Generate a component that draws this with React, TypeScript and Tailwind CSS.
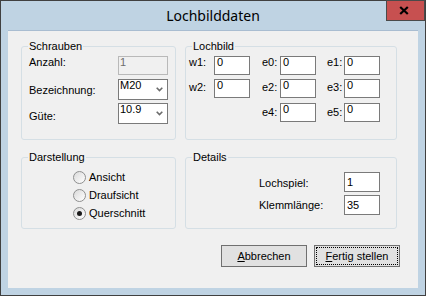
import React from "react";

type GroupProps = {
  title: string;
  className?: string;
  children?: React.ReactNode;
};

// group box with the caption sitting on the top border
const Group = ({ title, className, children }: GroupProps) => (
  <div className={`relative border border-[#d5dfe5] rounded-[3px] ${className ?? ""}`}>
    <span className="absolute left-[6px] top-[-7px] px-[1px] bg-[#f0f0f0] leading-[13px]">{title}</span>
    {children}
  </div>
);

const TextBox = ({ value, className }: { value: string; className?: string }) => (
  <div className={`w-[36px] border border-[#7a7a7a] bg-white pl-[2px] ${className ?? ""}`}>{value}</div>
);

const Combo = ({ value }: { value: string }) => (
  <div className="w-[50px] h-[21px] border border-[#7a7a7a] bg-white flex justify-between pl-[1px] pr-[4px] leading-[11px]">
    <span>{value}</span>
    <svg width="7" height="5" viewBox="0 0 7 5" className="self-center">
      <path d="M0.7 0.8 L3.5 3.6 L6.3 0.8" fill="none" stroke="#6b6b6b" strokeWidth="1.6" />
    </svg>
  </div>
);

const Radio = ({ label, checked }: { label: string; checked?: boolean }) => (
  <div className="flex items-center h-[18px] gap-[3px]">
    <span className="w-[13px] h-[13px] rounded-full border border-[#8e8f8f] bg-linear-to-br from-[#dadada] to-white flex items-center justify-center">
      {checked && <span className="w-[5px] h-[5px] rounded-full bg-[#1a1a1a]" />}
    </span>
    <span className="leading-[13px]">{label}</span>
  </div>
);

export default function App() {
  return (
    <div className="w-[426px] h-[296px] border border-[#404040] bg-[#bfd3e3] flex flex-col text-[11px] text-black font-['Liberation_Sans',Arial,sans-serif]">
      <div className="grid grid-cols-[39px_1fr_39px] h-[29px] shrink-0">
        <div />
        <div className="text-center text-[14px] leading-[29px] font-['Noto_Sans',sans-serif]">Lochbilddaten</div>
        <div className="-mt-[1px] self-start w-[39px] h-[21px] bg-[#c75050] border border-[#4a4a4a] flex items-center justify-center pr-[3px]">
          <svg width="10" height="9" viewBox="0 0 10 9">
            <path d="M1.2 1 L8.8 8 M8.8 1 L1.2 8" stroke="#000" strokeWidth="2.2" />
          </svg>
        </div>
      </div>

      <div className="mx-[7px] h-[258px] border-t border-[#a9bdd1] bg-[#f0f0f0] flex flex-col pt-[15px]">
        <div className="flex pl-[13px] gap-[9px]">
          <Group title="Schrauben" className="w-[155px] h-[94px]">
            <div className="flex flex-col px-[7px] pt-[9px]">
              <div className="flex justify-between items-start h-[23px]">
                <span className="leading-[13px]">Anzahl:</span>
                <div className="w-[50px] h-[19px] border border-[#b9b9b9] bg-[#f0f0f0] text-[#6d6d6d] pl-[1px] leading-[11px]">1</div>
              </div>
              <div className="flex justify-between items-start h-[24px]">
                <span className="leading-[13px] mt-[5px]">Bezeichnung:</span>
                <Combo value="M20" />
              </div>
              <div className="flex justify-between items-start h-[21px]">
                <span className="leading-[13px] mt-[7px]">Güte:</span>
                <Combo value="10.9" />
              </div>
            </div>
          </Group>

          <Group title="Lochbild" className="w-[212px] h-[94px]">
            <div className="flex flex-col pl-[3px] pt-[9px] leading-[13px]">
              <div className="flex h-[23px] items-start">
                <div className="w-[61px] flex justify-between items-start">
                  <span>w1:</span>
                  <TextBox value="0" className="h-[19px] leading-[11px]" />
                </div>
                <div className="ml-[12px] w-[54px] flex justify-between items-start">
                  <span>e0:</span>
                  <TextBox value="0" className="h-[19px] leading-[11px]" />
                </div>
                <div className="ml-[11px] w-[53px] flex justify-between items-start">
                  <span>e1:</span>
                  <TextBox value="0" className="h-[19px] leading-[11px]" />
                </div>
              </div>
              <div className="flex h-[24px] items-start">
                <div className="w-[61px] flex justify-between items-start">
                  <span className="mt-[2px]">w2:</span>
                  <TextBox value="0" className="h-[19px] leading-[11px]" />
                </div>
                <div className="ml-[12px] w-[54px] flex justify-between items-start">
                  <span className="mt-[2px]">e2:</span>
                  <TextBox value="0" className="h-[19px] leading-[11px]" />
                </div>
                <div className="ml-[11px] w-[53px] flex justify-between items-start">
                  <span className="mt-[2px]">e3:</span>
                  <TextBox value="0" className="h-[19px] leading-[11px]" />
                </div>
              </div>
              <div className="flex h-[20px] items-start">
                <div className="w-[61px]" />
                <div className="ml-[12px] w-[54px] flex justify-between items-start">
                  <span className="mt-[3px]">e4:</span>
                  <TextBox value="0" className="h-[19px] leading-[11px]" />
                </div>
                <div className="ml-[11px] w-[53px] flex justify-between items-start">
                  <span className="mt-[3px]">e5:</span>
                  <TextBox value="0" className="h-[19px] leading-[11px]" />
                </div>
              </div>
            </div>
          </Group>
        </div>

        <div className="flex pl-[13px] gap-[9px] mt-[17px]">
          <Group title="Darstellung" className="w-[155px] h-[72px]">
            <div className="flex flex-col pl-[51px] pt-[10px]">
              <Radio label="Ansicht" />
              <Radio label="Draufsicht" />
              <Radio label="Querschnitt" checked />
            </div>
          </Group>

          <Group title="Details" className="w-[212px] h-[72px]">
            <div className="flex flex-col pl-[73px] pr-[16px] pt-[14px] leading-[13px]">
              <div className="flex justify-between items-center h-[23px] pb-[3px]">
                <span className="mt-[2px]">Lochspiel:</span>
                <TextBox value="1" className="h-[20px] flex items-center" />
              </div>
              <div className="flex justify-between items-center h-[20px]">
                <span>Klemmlänge:</span>
                <TextBox value="35" className="h-[20px] flex items-center" />
              </div>
            </div>
          </Group>
        </div>

        <div className="flex justify-end gap-[7px] pr-[18px] mt-[16px]">
          <button className="w-[86px] h-[22px] border border-[#707070] bg-[#e1e1e1] flex items-center justify-center leading-[13px]">
            <span>
              <span className="underline underline-offset-[1px]">A</span>bbrechen
            </span>
          </button>
          <button className="w-[86px] h-[22px] border border-[#707070] bg-[#e1e1e1] p-[1px] leading-[13px]">
            <span className="w-full h-full border border-dotted border-black flex items-center justify-center">
              <span>
                <span className="underline underline-offset-[1px]">F</span>ertig stellen
              </span>
            </span>
          </button>
        </div>
      </div>
    </div>
  );
}
